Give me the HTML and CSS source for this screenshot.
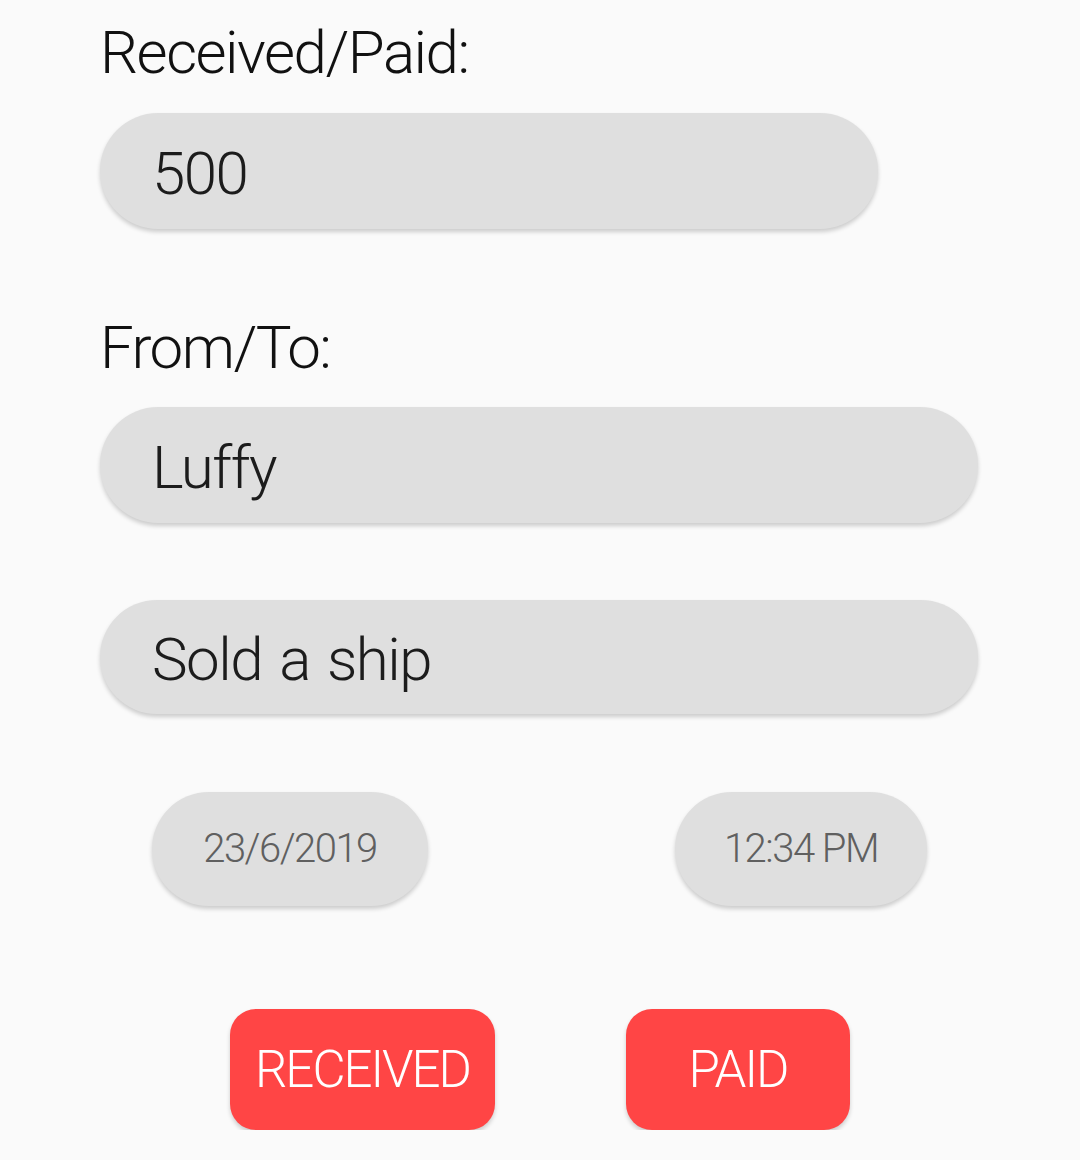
FILE: index.html
```html
<!DOCTYPE html>
<html>
<head>
<meta charset="utf-8">
<link rel="stylesheet" href="styles.css">
</head>
<body>
<div class="form">
  <div class="label label-first">Received/Paid:</div>
  <div class="field field-amount">500</div>
  <div class="label label-second">From/To:</div>
  <div class="field field-wide">Luffy</div>
  <div class="field field-wide field-note">Sold a ship</div>
  <div class="datetime">
    <div class="chip chip-date">23/6/2019</div>
    <div class="chip chip-time">12:34 PM</div>
  </div>
  <div class="actions">
    <div class="btn btn-received">RECEIVED</div>
    <div class="btn btn-paid">PAID</div>
  </div>
</div>
</body>
</html>
```
FILE: styles.css
```css
html, body {
  margin: 0;
  padding: 0;
  background: #fafafa;
  font-family: Roboto, "Noto Sans", sans-serif;
  font-weight: 300;
  color: #1a1a1a;
}
.form {
  display: flex;
  flex-direction: column;
  align-items: flex-start;
  padding-left: 100px;
  width: 880px;
}
.label {
  font-size: 60px;
  line-height: 70px;
  height: 70px;
  color: #111;
  letter-spacing: -1.5px;
}
.label-first {
  margin-top: 18px;
}
.label-second {
  margin-top: 84px;
}
.field {
  box-sizing: border-box;
  height: 116px;
  border-radius: 58px;
  background: #dfdfdf;
  box-shadow: 0 3px 4px rgba(0,0,0,0.18);
  display: flex;
  align-items: center;
  padding-left: 52px;
  padding-top: 5px;
  font-size: 60px;
  color: #1c1c1c;
  letter-spacing: -1.5px;
  word-spacing: 4px;
}
.field-amount {
  width: 778px;
  margin-top: 25px;
}
.field-wide {
  width: 878px;
}
.label-second + .field {
  margin-top: 24px;
}
.field-note {
  margin-top: 77px;
  height: 114px;
}
.datetime {
  display: flex;
  justify-content: space-between;
  width: 775px;
  margin-left: 52px;
  margin-top: 78px;
}
.chip {
  height: 114px;
  border-radius: 57px;
  background: #dfdfdf;
  box-shadow: 0 3px 4px rgba(0,0,0,0.18);
  display: flex;
  align-items: center;
  justify-content: center;
  font-size: 40px;
  color: #606060;
  letter-spacing: -1.5px;
  padding-bottom: 2px;
  box-sizing: border-box;
}
.chip-date {
  width: 276px;
}
.chip-time {
  width: 252px;
}
.actions {
  display: flex;
  justify-content: space-between;
  width: 620px;
  margin-left: 130px;
  margin-top: 103px;
}
.btn {
  height: 121px;
  border-radius: 26px;
  background: #ff4545;
  box-shadow: 0 3px 4px rgba(0,0,0,0.18);
  display: flex;
  align-items: center;
  justify-content: center;
  color: #fff;
  font-size: 51px;
  letter-spacing: -2px;
}
.btn-received {
  width: 265px;
}
.btn-paid {
  width: 224px;
}
```
